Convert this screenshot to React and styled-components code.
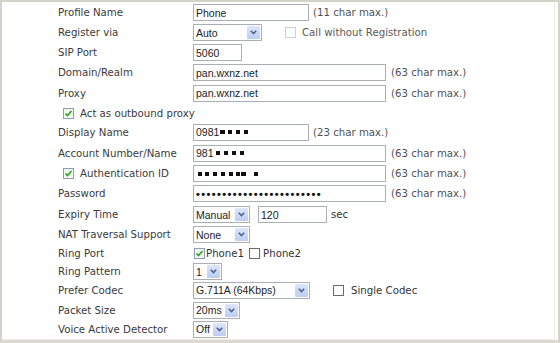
import React from "react";
import styled, { createGlobalStyle } from "styled-components";

const GlobalStyle = createGlobalStyle`
  html, body {
    margin: 0;
    padding: 0;
    background: #ffffff;
  }
`;

const Frame = styled.div`
  width: 560px;
  height: 343px;
  box-sizing: border-box;
  border-top: 2px solid #d5d2ca;
  border-left: 2px solid #d5d2ca;
  border-right: 2px solid #d5d2ca;
  border-bottom: 3px solid #dcd9d2;
  overflow: hidden;
`;

const Panel = styled.div`
  height: 100%;
  box-sizing: border-box;
  margin-right: 3px;
  border-right: 1px solid #edebe6;
  border-bottom: 1px solid #edebe6;
  padding: 1px 0 0 56px;
  display: flex;
  flex-direction: column;
`;

const Row = styled.div`
  display: grid;
  grid-template-columns: 135px 1fr;
  align-items: center;
  height: ${(p) => p.$h || 20}px;
`;

const Label = styled.div`
  font-family: "DejaVu Sans", Verdana, sans-serif;
  font-size: 10.2px;
  color: #3a3a3a;
  white-space: nowrap;
  display: flex;
  align-items: center;
  gap: 6px;
  padding-left: ${(p) => (p.$check ? 5 : 0)}px;
  grid-column: ${(p) => (p.$wide ? "1 / span 2" : "auto")};
`;

const Field = styled.div`
  display: flex;
  align-items: center;
  gap: ${(p) => p.$gap ?? 5}px;
  margin-left: ${(p) => p.$indent || 0}px;
`;

const TextBox = styled.div`
  width: ${(p) => p.$w}px;
  height: 17px;
  box-sizing: border-box;
  border: 1px solid #a9afb5;
  background: #fff;
  padding: 0 2px;
  display: flex;
  align-items: center;
  font-family: "Liberation Sans", Arial, sans-serif;
  font-size: 10.5px;
  color: #222;
  white-space: nowrap;
  overflow: hidden;
`;

const SelectBox = styled.div`
  width: ${(p) => p.$w}px;
  height: 17px;
  box-sizing: border-box;
  border: 1px solid #a9afb5;
  background: #fff;
  display: flex;
  align-items: stretch;
  font-family: "Liberation Sans", Arial, sans-serif;
  font-size: 10.5px;
  color: #222;
`;

const SelectValue = styled.span`
  flex: 1;
  padding-left: 2px;
  display: flex;
  align-items: center;
  white-space: nowrap;
  overflow: hidden;
`;

const ArrowButton = styled.span`
  width: 13px;
  margin: 1px;
  background: linear-gradient(#dce6fb, #bccdf3);
  border-radius: 1px;
  display: flex;
  align-items: center;
  justify-content: center;
`;

const Hint = styled.span`
  font-family: "DejaVu Sans", Verdana, sans-serif;
  font-size: 10.2px;
  color: #505050;
  white-space: nowrap;
`;

const OptionText = styled.span`
  font-family: "DejaVu Sans", Verdana, sans-serif;
  font-size: 10.2px;
  color: ${(p) => (p.$dim ? "#5a5a5a" : "#333")};
  white-space: nowrap;
`;

const Box = styled.span`
  width: 11px;
  height: 11px;
  box-sizing: border-box;
  border: 1px solid ${(p) => (p.$disabled ? "#cfcfcf" : p.$checked ? "#8aa0b2" : "#6b6b6b")};
  background: ${(p) => (p.$checked ? "#f4f7ee" : "#fff")};
  display: inline-flex;
  align-items: center;
  justify-content: center;
  flex: none;
`;

const Masked = styled.span`
  font-family: "Liberation Sans", Arial, sans-serif;
  font-weight: bold;
  letter-spacing: 1.4px;
  font-size: 11px;
  color: #111;
`;

const Blot = styled.span`
  display: inline-block;
  width: ${(p) => p.$w || 4}px;
  height: 4px;
  background: #111;
  margin-left: ${(p) => p.$gap ?? 3}px;
  vertical-align: middle;
`;

const BlotRun = styled.span`
  display: inline-flex;
  align-items: center;
`;

const Redacted = ({ items }) => (
  <BlotRun>
    {items.map(([w, g], i) => (
      <Blot key={i} $w={w} $gap={g} />
    ))}
  </BlotRun>
);

const Check = ({ checked, disabled }) => (
  <Box $checked={checked} $disabled={disabled}>
    {checked && (
      <svg width="9" height="9" viewBox="0 0 9 9">
        <path d="M1.5 4.5 L3.5 6.6 L7.5 2" stroke="#27a327" strokeWidth="1.6" fill="none" />
      </svg>
    )}
  </Box>
);

const Select = ({ w, value }) => (
  <SelectBox $w={w}>
    <SelectValue>{value}</SelectValue>
    <ArrowButton>
      <svg width="7" height="5" viewBox="0 0 7 5">
        <path d="M0.8 0.8 L3.5 3.6 L6.2 0.8" stroke="#4d6185" strokeWidth="1.5" fill="none" />
      </svg>
    </ArrowButton>
  </SelectBox>
);

export default function App() {
  return (
    <>
      <GlobalStyle />
      <Frame>
        <Panel>
          <Row $h={20}>
            <Label>Profile Name</Label>
            <Field $gap={4}>
              <TextBox $w={116}>Phone</TextBox>
              <Hint>(11 char max.)</Hint>
            </Field>
          </Row>
          <Row $h={20}>
            <Label>Register via</Label>
            <Field $gap={23}>
              <Select w={69} value="Auto" />
              <Field $gap={6}>
                <Check disabled />
                <OptionText $dim>Call without Registration</OptionText>
              </Field>
            </Field>
          </Row>
          <Row $h={20}>
            <Label>SIP Port</Label>
            <Field>
              <TextBox $w={49}>5060</TextBox>
            </Field>
          </Row>
          <Row $h={20}>
            <Label>Domain/Realm</Label>
            <Field>
              <TextBox $w={193}>pan.wxnz.net</TextBox>
              <Hint>(63 char max.)</Hint>
            </Field>
          </Row>
          <Row $h={22}>
            <Label>Proxy</Label>
            <Field>
              <TextBox $w={193}>pan.wxnz.net</TextBox>
              <Hint>(63 char max.)</Hint>
            </Field>
          </Row>
          <Row $h={18}>
            <Label $wide $check>
              <Check checked />
              Act as outbound proxy
            </Label>
          </Row>
          <Row $h={20}>
            <Label>Display Name</Label>
            <Field $gap={4}>
              <TextBox $w={116}>
                0981
                <Redacted items={[[5, 1], [4, 3], [4, 4], [4, 4]]} />
              </TextBox>
              <Hint>(23 char max.)</Hint>
            </Field>
          </Row>
          <Row $h={22}>
            <Label>Account Number/Name</Label>
            <Field>
              <TextBox $w={193}>
                981
                <Redacted items={[[4, 2], [4, 4], [4, 4], [4, 4]]} />
              </TextBox>
              <Hint>(63 char max.)</Hint>
            </Field>
          </Row>
          <Row $h={20}>
            <Label $check>
              <Check checked />
              Authentication ID
            </Label>
            <Field>
              <TextBox $w={193}>
                <Redacted items={[[4, 2], [4, 3], [4, 4], [4, 4], [4, 4], [4, 3], [5, 1], [4, 8]]} />
              </TextBox>
              <Hint>(63 char max.)</Hint>
            </Field>
          </Row>
          <Row $h={20}>
            <Label>Password</Label>
            <Field>
              <TextBox $w={193}>
                <Masked>••••••••••••••••••••••••</Masked>
              </TextBox>
              <Hint>(63 char max.)</Hint>
            </Field>
          </Row>
          <Row $h={22}>
            <Label>Expiry Time</Label>
            <Field $gap={8}>
              <Select w={57} value="Manual" />
              <Field $gap={4}>
                <TextBox $w={69}>120</TextBox>
                <OptionText>sec</OptionText>
              </Field>
            </Field>
          </Row>
          <Row $h={18}>
            <Label>NAT Traversal Support</Label>
            <Field>
              <Select w={57} value="None" />
            </Field>
          </Row>
          <Row $h={20}>
            <Label>Ring Port</Label>
            <Field $gap={5}>
              <Field $gap={1} $indent={1}>
                <Check checked />
                <OptionText>Phone1</OptionText>
              </Field>
              <Field $gap={3}>
                <Check />
                <OptionText>Phone2</OptionText>
              </Field>
            </Field>
          </Row>
          <Row $h={16}>
            <Label>Ring Pattern</Label>
            <Field>
              <Select w={29} value="1" />
            </Field>
          </Row>
          <Row $h={22}>
            <Label>Prefer Codec</Label>
            <Field $gap={23}>
              <Select w={117} value="G.711A (64Kbps)" />
              <Field $gap={7}>
                <Check />
                <OptionText>Single Codec</OptionText>
              </Field>
            </Field>
          </Row>
          <Row $h={18}>
            <Label>Packet Size</Label>
            <Field>
              <Select w={47} value="20ms" />
            </Field>
          </Row>
          <Row $h={20}>
            <Label>Voice Active Detector</Label>
            <Field>
              <Select w={35} value="Off" />
            </Field>
          </Row>
        </Panel>
      </Frame>
    </>
  );
}
